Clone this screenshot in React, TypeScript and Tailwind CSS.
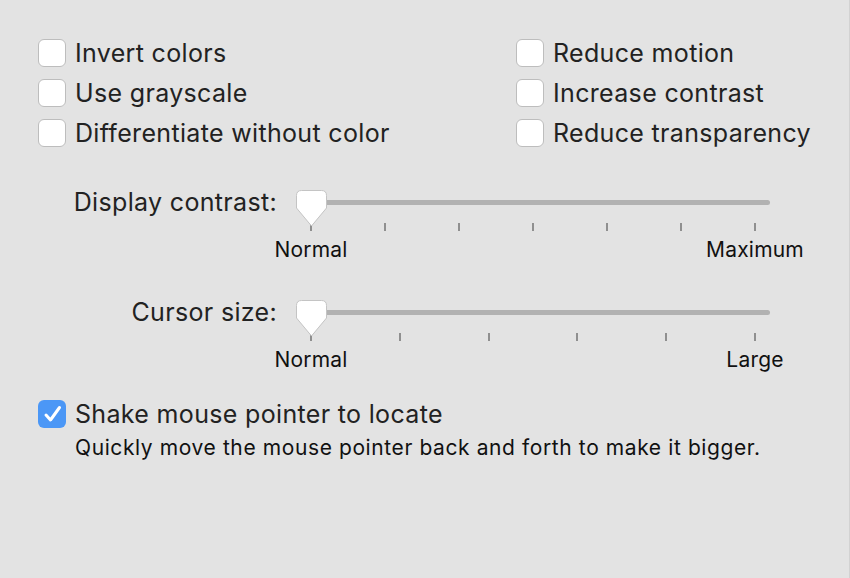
import React from "react";

const font = { fontFamily: "Inter, 'Liberation Sans', sans-serif" };

function Box({ checked = false }: { checked?: boolean }) {
  if (checked) {
    return (
      <div className="w-[28px] h-[28px] rounded-[6px] bg-[#4b97f6] flex items-center justify-center shrink-0">
        <svg width="28" height="28" viewBox="0 0 28 28">
          <path d="M8 15 L12.5 20 L21.5 7.5" fill="none" stroke="white" strokeWidth="3" strokeLinecap="round" strokeLinejoin="round" />
        </svg>
      </div>
    );
  }
  return <div className="w-[28px] h-[28px] rounded-[6px] bg-white border border-[#bdbdbd] shrink-0" />;
}

function Check({ label, checked = false }: { label: string; checked?: boolean }) {
  return (
    <div className="h-[40px] flex items-center gap-[9px]">
      <Box checked={checked} />
      <span className="text-[25px] leading-[24px] tracking-[0.33px] text-[#222]">{label}</span>
    </div>
  );
}

function Slider({ label, ticks, min, max, mt }: { label: string; ticks: number; min: string; max: string; mt: string }) {
  return (
    <div className={`flex items-start ${mt}`}>
      <div className="w-[239px] text-right text-[25px] leading-[24px] tracking-[0.33px] text-[#222]">{label}</div>
      <div className="ml-[19px] w-[474px] flex flex-col">
        <div className="relative h-[48px]">
          <div className="absolute left-0 right-0 top-[10px] h-[5px] rounded-full bg-[#b2b2b2]" />
          <div className="absolute left-0 right-0 top-[33px] px-[14px] flex justify-between">
            {Array.from({ length: ticks }).map((_, i) => (
              <div key={i} className="w-[2px] h-[8px] bg-[#8f8f8f]" />
            ))}
          </div>
          <svg className="absolute left-0 top-0" width="32" height="38" viewBox="0 0 32 38">
            <path d="M5.5 0.5 H25.5 Q30.5 0.5 30.5 5.5 V18 L15.5 36 L0.5 18 V5.5 Q0.5 0.5 5.5 0.5 Z" fill="white" stroke="#c4c4c4" strokeWidth="1" />
          </svg>
        </div>
        <div className="h-[24px] px-[15px] flex justify-between text-[21px] leading-[24px] tracking-[0.2px] text-[#111]">
          <div className="w-0 flex justify-center whitespace-nowrap">{min}</div>
          <div className="w-0 flex justify-center whitespace-nowrap">{max}</div>
        </div>
      </div>
    </div>
  );
}

export default function App() {
  return (
    <div style={font} className="w-[850px] h-[578px] bg-[#e3e3e3] border-r border-[#d2d2d2] pt-[33px] pl-[38px] overflow-hidden">
      <div className="grid grid-cols-[478px_auto]">
        <Check label="Invert colors" />
        <Check label="Reduce motion" />
        <Check label="Use grayscale" />
        <Check label="Increase contrast" />
        <Check label="Differentiate without color" />
        <Check label="Reduce transparency" />
      </div>
      <Slider label="Display contrast:" ticks={7} min="Normal" max="Maximum" mt="mt-[37px]" />
      <Slider label="Cursor size:" ticks={6} min="Normal" max="Large" mt="mt-[38px]" />
      <div className="mt-[22px]">
        <Check label="Shake mouse pointer to locate" checked />
        <div className="mt-[2px] ml-[37px] text-[21px] leading-[24px] tracking-[0.6px] text-[#111] whitespace-nowrap">
          Quickly move the mouse pointer back and forth to make it bigger.
        </div>
      </div>
    </div>
  );
}
